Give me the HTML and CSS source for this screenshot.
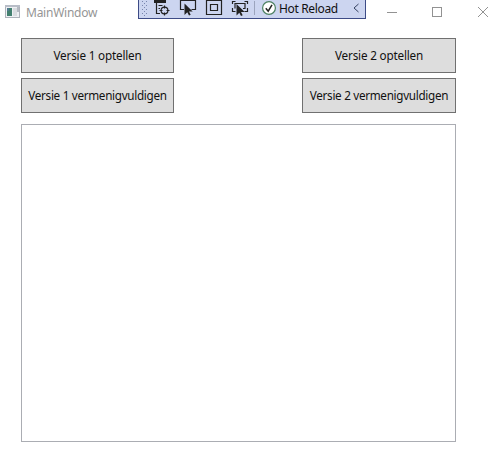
FILE: index.html
```html
<!DOCTYPE html>
<html lang="nl">
<head>
<meta charset="utf-8">
<title>MainWindow</title>
<link rel="stylesheet" href="styles.css">
</head>
<body>
<header class="titlebar">
  <svg class="app-icon" width="16" height="14" viewBox="0 0 16 14">
    <rect x=".5" y=".5" width="14" height="12" fill="#eef0f3" stroke="#aeb2ba"/>
    <path d="M0 1h15" stroke="#b8bdc7" stroke-width="2"/>
    <rect x="2" y="3" width="5" height="8" fill="#43806f"/>
    <path d="M2 3h2v3H2z" fill="#527b91"/>
    <rect x="8" y="3" width="4" height="8" fill="#d9dce0"/>
    <path d="M12 2h2v5h-2z" fill="#b5bac2"/>
  </svg>
  <span class="title">MainWindow</span>
  <svg class="controls" width="102" height="12" viewBox="0 0 102 12" fill="none" stroke="#929292">
    <path d="M0 5.5h10"/>
    <rect x="45.5" y=".5" width="9" height="9"/>
    <path d="M91 0l10 10M101 0L91 10"/>
  </svg>
  <div class="toolbar">
    <svg class="tools" width="124" height="18" viewBox="139 0 124 18" fill="none" stroke="#222" stroke-width="1.2">
      <path fill="#7885ae" stroke="none" d="M142 1h1v1h-1zM146 1h1v1h-1zM144 3h1v1h-1zM142 5h1v1h-1zM146 5h1v1h-1zM144 7h1v1h-1zM142 9h1v1h-1zM146 9h1v1h-1zM144 11h1v1h-1zM142 13h1v1h-1zM146 13h1v1h-1zM144 15h1v1h-1z"/>
      <path d="M154 1.500h12" stroke-width="3"/>
      <path d="M156.500 3v10.500h3.500M158.500 5.500h4M158.500 8.500h1.500"/>
      <circle cx="164.500" cy="10.500" r="3.400"/>
      <path d="M164.500 5.500v3M164.500 12.500v3M159.500 10.500h3M166.500 10.500h3"/>
      <path d="M184 9.500h-3.500v-9h15v9h-4"/>
      <path d="M184.500 3.500v11.500l2.800-2.700 1.700 3.200 1.700-.8-1.700-3.200h3.700z" fill="#222" stroke="none"/>
      <path d="M206.500 .5h15v14h-15zM210.500 4.500h7v6h-7z"/>
      <path d="M232.500 4V1.500h3M244.500 1.500h3V4M232.500 8v3.500h3M247.500 8v3.500h-3M235 8.500V3.500h10v5h-2"/>
      <path d="M236.500 4v11.500l2.800-2.700 1.700 3.200 1.700-.8-1.700-3.200h3.700z" fill="#222" stroke="none"/>
      <path d="M254.500 1v14" stroke="#9ba4bd" stroke-width="1"/>
    </svg>
    <svg class="check" width="14" height="14" viewBox="0 0 14 14" fill="none"><circle cx="7" cy="7" r="6.400" fill="#fff" stroke="#4c8062" stroke-width="1.200"/><path d="M3.800 7.200l2.400 3L10 3.800" stroke="#222" stroke-width="1.500"/></svg>
    <span class="reload">Hot Reload</span>
    <svg class="chevron" width="6" height="10" viewBox="0 0 6 10"><path d="M5.500 1L1 5l4.500 4" fill="none" stroke="#34415f"/></svg>
  </div>
</header>
<main class="content">
  <div class="actions">
    <button class="action"><span>Versie 1 optellen</span></button>
    <button class="action"><span>Versie 2 optellen</span></button>
    <button class="action"><span class="long">Versie 1 vermenigvuldigen</span></button>
    <button class="action"><span class="long">Versie 2 vermenigvuldigen</span></button>
  </div>
  <div class="output"></div>
</main>
</body>
</html>
```
FILE: styles.css
```css
* { box-sizing: border-box; }
body { margin: 0; width: 503px; height: 468px; overflow: hidden; background: #fff; font: 12px/16px "Noto Sans", sans-serif; color: #111; }
svg { display: block; flex: none; }
.titlebar { position: relative; display: flex; height: 38px; padding-left: 5px; }
.app-icon { margin-top: 5px; }
.title { margin: 5px 0 0 5px; color: #959595; white-space: nowrap; letter-spacing: -.25px; }
.controls { position: absolute; left: 387px; top: 7px; }
.toolbar { position: absolute; left: 138px; top: 0; width: 228px; height: 19px; display: flex; background: #ccd5f0; border: 1px solid #3d4b86; border-top: 0; }
.check { margin: 1px 0 0 -1px; }
.reload { margin: 1px 0 0 3px; width: 60px; white-space: nowrap; letter-spacing: -.35px; }
.chevron { margin: 3px 0 0 14px; }
.content { padding: 0 47px 0 21px; }
.actions { display: grid; grid-template-columns: 153px 154px; justify-content: space-between; gap: 5px 0; }
.action { height: 35px; padding: 0 0 2px; border: 1px solid #707070; background: #ddd; color: #111; font: inherit; font-size: 11.7px; letter-spacing: -.18px; white-space: nowrap; }
.long { letter-spacing: -.3px; }
.output { height: 318px; margin-top: 11px; border: 1px solid #abadb3; }
```
